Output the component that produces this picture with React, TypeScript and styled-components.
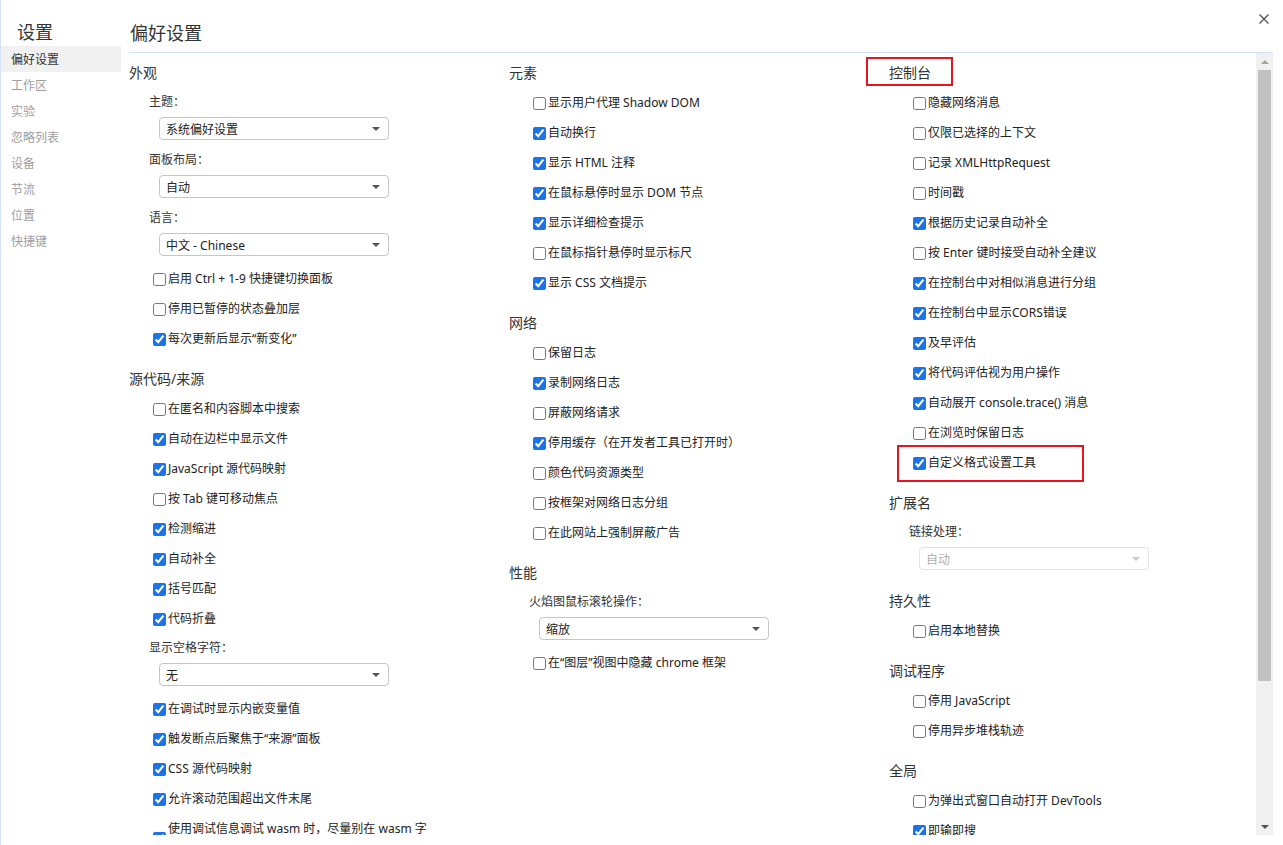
import React from "react";
import styled, { createGlobalStyle } from "styled-components";

const GlobalStyle = createGlobalStyle`
  html, body {
    margin: 0;
    padding: 0;
    height: 100%;
    overflow: hidden;
    background: #fff;
  }
  body {
    font-family: "Noto Sans", "Noto Sans CJK SC", sans-serif;
    font-size: 12px;
    color: #222;
  }
  #root {
    height: 100%;
  }
`;

const Page = styled.div`
  display: flex;
  height: 100vh;
`;

const Sidebar = styled.nav`
  width: 121px;
  flex: none;
  box-sizing: border-box;
  border-left: 1px solid #d3e2f7;
`;

const SidebarTitle = styled.div`
  padding: 21px 0 3px 16px;
  font-size: 18px;
  line-height: 22px;
  color: #333;
`;

const NavItem = styled.div<{ $active?: boolean }>`
  height: 26px;
  line-height: 27px;
  padding-left: 10px;
  color: ${(p) => (p.$active ? "#333" : "#9e9e9e")};
  background: ${(p) => (p.$active ? "#f1f1f1" : "transparent")};
`;

const Main = styled.main`
  flex: 1;
  min-width: 0;
  display: flex;
  flex-direction: column;
  padding: 0 10px 10px 8px;
`;

const Header = styled.header`
  flex: none;
  height: 52px;
  display: flex;
  justify-content: space-between;
  align-items: flex-start;
  border-bottom: 1px solid #cfe0f8;
`;

const HeaderTitle = styled.h1`
  margin: 0;
  padding: 22px 0 0 1px;
  font-size: 18px;
  line-height: 22px;
  font-weight: normal;
  color: #333;
`;

const CloseButton = styled.button`
  width: 10px;
  height: 10px;
  margin: 14px 4px 0 0;
  padding: 0;
  border: 0;
  background: none;
  display: flex;
  cursor: pointer;
`;

const Body = styled.div`
  flex: 1;
  min-height: 0;
  display: flex;
`;

const Columns = styled.div`
  flex: 1;
  min-width: 0;
  overflow: hidden;
  display: grid;
  grid-template-columns: repeat(3, 380px);
  align-content: start;
  padding-top: 4px;
`;

const Column = styled.div`
  display: flex;
  flex-direction: column;
`;

const Section = styled.section`
  margin-bottom: 10px;
`;

const SectionTitle = styled.h2`
  margin: 0;
  height: 30px;
  line-height: 31px;
  font-size: 14px;
  font-weight: normal;
  color: #333;
`;

const Marked = styled.div<{ $top: number; $left: number; $width: number; $height: number; $inline?: boolean }>`
  position: relative;
  display: ${(p) => (p.$inline ? "inline-block" : "block")};
  &::after {
    content: "";
    position: absolute;
    top: ${(p) => p.$top}px;
    left: ${(p) => p.$left}px;
    width: ${(p) => p.$width}px;
    height: ${(p) => p.$height}px;
    box-sizing: border-box;
    border: 2px solid #e5151d;
    pointer-events: none;
  }
`;

const Field = styled.div`
  padding-left: 20px;
  margin-bottom: 5px;
`;

const FieldLabel = styled.div`
  height: 30px;
  line-height: 30px;
  color: #333;
`;

const Select = styled.div<{ $disabled?: boolean }>`
  margin-left: 10px;
  width: 230px;
  height: 23px;
  box-sizing: border-box;
  border: 1px solid ${(p) => (p.$disabled ? "#e4e4e4" : "#c6c6c6")};
  border-radius: 4px;
  display: flex;
  align-items: center;
  justify-content: space-between;
  padding: 0 8px 0 6px;
  color: ${(p) => (p.$disabled ? "#b0b0b0" : "#222")};
  background: #fff;
`;

const Caret = styled.span<{ $disabled?: boolean }>`
  width: 0;
  height: 0;
  border-left: 4px solid transparent;
  border-right: 4px solid transparent;
  border-top: 4px solid ${(p) => (p.$disabled ? "#c8c8c8" : "#555")};
`;

/* margin collapses with the field's 5px, so 7px gives 2px extra */
const Row = styled.label<{ $afterField?: boolean }>`
  display: flex;
  align-items: center;
  padding: 7px 0 5px 24px;
  margin-top: ${(p) => (p.$afterField ? 7 : 0)}px;
  line-height: 18px;
`;

const Check = styled.input.attrs({ type: "checkbox", readOnly: true })`
  flex: none;
  width: 13px;
  height: 13px;
  margin: 0 2px 0 0;
  accent-color: #1a73e8;
`;

const RowText = styled.span`
  max-width: 262px;
  color: #222;
`;

const Scrollbar = styled.div`
  width: 17px;
  flex: none;
  background: #f1f1f1;
  display: flex;
  flex-direction: column;
`;

const ScrollButton = styled.div<{ $dir: "up" | "down"; $dim?: boolean }>`
  height: 17px;
  flex: none;
  display: flex;
  align-items: center;
  justify-content: center;
  &::before {
    content: "";
    border-left: 4px solid transparent;
    border-right: 4px solid transparent;
    ${(p) =>
      p.$dir === "up"
        ? `border-bottom: 4px solid ${p.$dim ? "#a3a3a3" : "#505050"};`
        : `border-top: 4px solid ${p.$dim ? "#a3a3a3" : "#505050"};`}
  }
`;

const Thumb = styled.div`
  flex: none;
  height: 611px;
  margin: 0 2px;
  background: #c1c1c1;
`;

const Track = styled.div`
  flex: 1;
`;

type Item =
  | { kind: "check"; text: string; on: boolean; marked?: boolean }
  | { kind: "select"; label: string; value: string; disabled?: boolean };

type Group = { title: string; marked?: boolean; items: Item[] };

const c = (text: string, on: boolean, marked?: boolean): Item => ({ kind: "check", text, on, marked });
const s = (label: string, value: string, disabled?: boolean): Item => ({ kind: "select", label, value, disabled });

const columns: Group[][] = [
  [
    {
      title: "外观",
      items: [
        s("主题：", "系统偏好设置"),
        s("面板布局：", "自动"),
        s("语言：", "中文 - Chinese"),
        c("启用 Ctrl + 1-9 快捷键切换面板", false),
        c("停用已暂停的状态叠加层", false),
        c("每次更新后显示“新变化”", true),
      ],
    },
    {
      title: "源代码/来源",
      items: [
        c("在匿名和内容脚本中搜索", false),
        c("自动在边栏中显示文件", true),
        c("JavaScript 源代码映射", true),
        c("按 Tab 键可移动焦点", false),
        c("检测缩进", true),
        c("自动补全", true),
        c("括号匹配", true),
        c("代码折叠", true),
        s("显示空格字符：", "无"),
        c("在调试时显示内嵌变量值", true),
        c("触发断点后聚焦于“来源”面板", true),
        c("CSS 源代码映射", true),
        c("允许滚动范围超出文件末尾", true),
        c("使用调试信息调试 wasm 时，尽量别在 wasm 字节码中暂停", true),
      ],
    },
  ],
  [
    {
      title: "元素",
      items: [
        c("显示用户代理 Shadow DOM", false),
        c("自动换行", true),
        c("显示 HTML 注释", true),
        c("在鼠标悬停时显示 DOM 节点", true),
        c("显示详细检查提示", true),
        c("在鼠标指针悬停时显示标尺", false),
        c("显示 CSS 文档提示", true),
      ],
    },
    {
      title: "网络",
      items: [
        c("保留日志", false),
        c("录制网络日志", true),
        c("屏蔽网络请求", false),
        c("停用缓存（在开发者工具已打开时）", true),
        c("颜色代码资源类型", false),
        c("按框架对网络日志分组", false),
        c("在此网站上强制屏蔽广告", false),
      ],
    },
    {
      title: "性能",
      items: [s("火焰图鼠标滚轮操作：", "缩放"), c("在“图层”视图中隐藏 chrome 框架", false)],
    },
  ],
  [
    {
      title: "控制台",
      marked: true,
      items: [
        c("隐藏网络消息", false),
        c("仅限已选择的上下文", false),
        c("记录 XMLHttpRequest", false),
        c("时间戳", false),
        c("根据历史记录自动补全", true),
        c("按 Enter 键时接受自动补全建议", false),
        c("在控制台中对相似消息进行分组", true),
        c("在控制台中显示CORS错误", true),
        c("及早评估", true),
        c("将代码评估视为用户操作", true),
        c("自动展开 console.trace() 消息", true),
        c("在浏览时保留日志", false),
        c("自定义格式设置工具", true, true),
      ],
    },
    { title: "扩展名", items: [s("链接处理：", "自动", true)] },
    { title: "持久性", items: [c("启用本地替换", false)] },
    { title: "调试程序", items: [c("停用 JavaScript", false), c("停用异步堆栈轨迹", false)] },
    { title: "全局", items: [c("为弹出式窗口自动打开 DevTools", false), c("即输即搜", true)] },
  ],
];

const navItems = ["偏好设置", "工作区", "实验", "忽略列表", "设备", "节流", "位置", "快捷键"];

function SettingItem({ item, afterField }: { item: Item; afterField: boolean }) {
  if (item.kind === "select") {
    return (
      <Field>
        <FieldLabel>{item.label}</FieldLabel>
        <Select $disabled={item.disabled}>
          <span>{item.value}</span>
          <Caret $disabled={item.disabled} />
        </Select>
      </Field>
    );
  }
  const row = (
    <Row $afterField={afterField}>
      <Check checked={item.on} />
      <RowText>{item.text}</RowText>
    </Row>
  );
  if (item.marked) {
    return (
      <Marked $top={-2} $left={8} $width={187} $height={37}>
        {row}
      </Marked>
    );
  }
  return row;
}

export default function App() {
  return (
    <>
      <GlobalStyle />
      <Page>
        <Sidebar>
          <SidebarTitle>设置</SidebarTitle>
          {navItems.map((n, i) => (
            <NavItem key={n} $active={i === 0}>
              {n}
            </NavItem>
          ))}
        </Sidebar>
        <Main>
          <Header>
            <HeaderTitle>偏好设置</HeaderTitle>
            <CloseButton aria-label="关闭">
              <svg width="10" height="10" viewBox="0 0 10 10">
                <path d="M0.5 0.5L9.5 9.5M9.5 0.5L0.5 9.5" stroke="#555" strokeWidth="1.4" />
              </svg>
            </CloseButton>
          </Header>
          <Body>
            <Columns>
              {columns.map((groups, ci) => (
                <Column key={ci}>
                  {groups.map((g) => (
                    <Section key={g.title}>
                      <SectionTitle>
                        {g.marked ? (
                          <Marked $inline $top={0} $left={-23} $width={87} $height={29}>
                            {g.title}
                          </Marked>
                        ) : (
                          g.title
                        )}
                      </SectionTitle>
                      {g.items.map((it, ii) => (
                        <SettingItem
                          key={ii}
                          item={it}
                          afterField={ii > 0 && g.items[ii - 1].kind === "select"}
                        />
                      ))}
                    </Section>
                  ))}
                </Column>
              ))}
            </Columns>
            <Scrollbar>
              <ScrollButton $dir="up" $dim />
              <Thumb />
              <Track />
              <ScrollButton $dir="down" />
            </Scrollbar>
          </Body>
        </Main>
      </Page>
    </>
  );
}
